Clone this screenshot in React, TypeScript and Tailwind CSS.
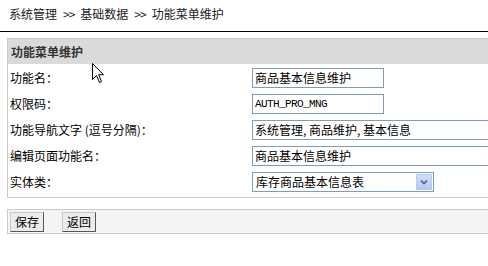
import React from 'react';

const rows = [
  { label: '功能名：', value: '商品基本信息维护', width: 'w-[132px]' },
  { label: '权限码：', value: 'AUTH_PRO_MNG', width: 'w-[132px]', mono: true },
  { label: '功能导航文字 (逗号分隔)：', value: '系统管理, 商品维护, 基本信息', width: 'w-[260px]' },
  { label: '编辑页面功能名：', value: '商品基本信息维护', width: 'w-[260px]' },
];

const Cursor = () => (
  <svg className="absolute left-[92px] top-[63px]" width="13" height="21" viewBox="0 0 13 21">
    <path
      d="M0.5 0.5 L0.5 16.5 L4.5 12.5 L7.5 19.5 L9.5 18.5 L6.7 11.7 L11.5 11.7 Z"
      fill="#fff"
      stroke="#000"
      strokeWidth="1"
      strokeLinejoin="miter"
    />
  </svg>
);

const SelectBox = () => (
  <div className="w-[182px] h-[20px] shrink-0 border border-[#7f9db9] bg-white flex items-stretch">
    <div className="flex-1 pl-[3px] flex items-center text-[12px] text-black">库存商品基本信息表</div>
    <div className="w-[16px] m-px border border-[#b8c9f2] bg-gradient-to-b from-[#d2def9] to-[#b3c8f5] flex items-center justify-center">
      <svg width="8" height="6" viewBox="0 0 8 6">
        <path d="M1 1.5 L4 4.5 L7 1.5" fill="none" stroke="#4d6185" strokeWidth="1.6" />
      </svg>
    </div>
  </div>
);

const Button = ({ children }: { children: React.ReactNode }) => (
  <button className="w-[34px] h-[20px] bg-[#ececec] border border-t-[#c8c8c8] border-l-[#c8c8c8] border-r-[#555] border-b-[#555] text-[12px] text-black leading-none flex items-center justify-center">
    {children}
  </button>
);

const Sep = () => <span className="mx-[6px] tracking-[-1px]">&gt;&gt;</span>;

export default function App() {
  return (
    <div
      className="relative w-[488px] h-[266px] overflow-hidden bg-white text-[#222]"
      style={{ fontFamily: '"Noto Sans CJK SC", "Liberation Sans", sans-serif' }}
    >
      <div className="h-[28px] pl-[9px] flex items-center text-[12px] text-[#222]">
        系统管理<Sep />基础数据<Sep />功能菜单维护
      </div>
      <div className="mt-[3px] h-px bg-black" />

      <div className="ml-[7px] mt-[6px] w-[500px] border-l border-b border-[#cccccc]">
        <div className="h-[26px] bg-[#dadada] border-t border-[#c6c6c6] pl-[3px] flex items-center text-[12px] font-bold text-[#333]">
          功能菜单维护
        </div>
        <div className="pt-px pb-[2px]">
          {rows.map((row) => (
            <div key={row.label} className="h-[26px] flex items-center">
              <div className="w-[244px] shrink-0 pl-[2px] text-[12px] text-black">{row.label}</div>
              <div
                className={`${row.width} shrink-0 h-[20px] border border-[#7f9db9] bg-white px-[2px] flex items-center text-black ${
                  row.mono ? 'text-[11px] tracking-[-0.6px]' : 'text-[12px]'
                }`}
                style={row.mono ? { fontFamily: '"Liberation Mono", monospace' } : undefined}
              >
                {row.value}
              </div>
            </div>
          ))}
          <div className="h-[26px] flex items-center">
            <div className="w-[244px] shrink-0 pl-[2px] text-[12px] text-black">实体类：</div>
            <SelectBox />
          </div>
        </div>
      </div>

      <div className="ml-[7px] mt-[11px] w-[500px] h-[25px] border border-[#cccccc] bg-[#f4f4f4] pl-[2px] flex items-center gap-[18px]">
        <Button>保存</Button>
        <Button>返回</Button>
      </div>

      <Cursor />
    </div>
  );
}
